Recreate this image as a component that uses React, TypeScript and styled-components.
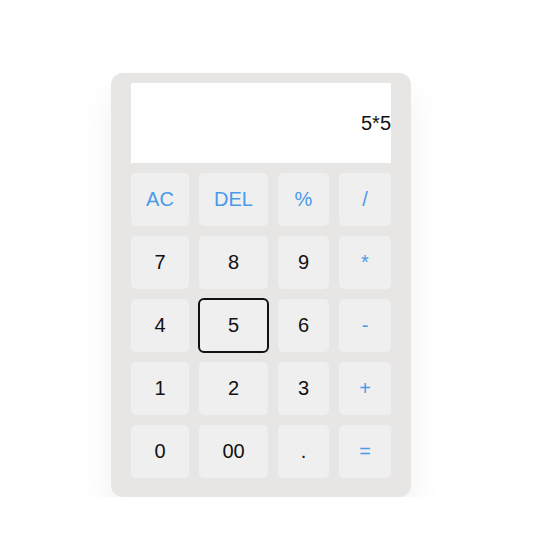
import React from "react";
import styled, { createGlobalStyle } from "styled-components";

const Global = createGlobalStyle`
  html, body { margin: 0; padding: 0; background: #ffffff; }
  body { font-family: "Liberation Sans", Arial, sans-serif; }
`;

const Page = styled.div`
  display: flex;
  align-items: flex-start;
  padding: 73px 0 0 111px;
`;

const Calculator = styled.div`
  width: 300px;
  box-sizing: border-box;
  padding: 10px 20px 19px;
  background: #e8e5e5;
  border-radius: 12px;
  box-shadow: 0 18px 36px rgba(0, 0, 0, 0.06);
  display: flex;
  flex-direction: column;
  gap: 10px;
`;

const Display = styled.div`
  height: 80px;
  background: #ffffff;
  display: flex;
  align-items: center;
  justify-content: flex-end;
  font-size: 20px;
  color: #111111;
`;

const Keys = styled.div`
  display: grid;
  grid-template-columns: 58px 69px 51px 52px;
  grid-auto-rows: 53px;
  gap: 10px;
`;

const Key = styled.button<{ $op?: boolean; $focused?: boolean }>`
  box-sizing: border-box;
  margin: 0;
  padding: 0;
  border: none;
  outline: ${(p) => (p.$focused ? "2px solid #111111" : "none")};
  outline-offset: -1px;
  border-radius: 5px;
  background: #efefef;
  font-family: "Liberation Sans", Arial, sans-serif;
  font-size: 20px;
  color: ${(p) => (p.$op ? "#4a9aea" : "#111111")};
  display: flex;
  align-items: center;
  justify-content: center;
  cursor: pointer;
`;

const keys: { label: string; op?: boolean }[] = [
  { label: "AC", op: true },
  { label: "DEL", op: true },
  { label: "%", op: true },
  { label: "/", op: true },
  { label: "7" },
  { label: "8" },
  { label: "9" },
  { label: "*", op: true },
  { label: "4" },
  { label: "5" },
  { label: "6" },
  { label: "-", op: true },
  { label: "1" },
  { label: "2" },
  { label: "3" },
  { label: "+", op: true },
  { label: "0" },
  { label: "00" },
  { label: "." },
  { label: "=", op: true },
];

export default function App() {
  return (
    <>
      <Global />
      <Page>
        <Calculator>
          <Display>5*5</Display>
          <Keys>
            {keys.map((k) => (
              <Key key={k.label} $op={k.op} $focused={k.label === "5"}>
                {k.label}
              </Key>
            ))}
          </Keys>
        </Calculator>
      </Page>
    </>
  );
}
